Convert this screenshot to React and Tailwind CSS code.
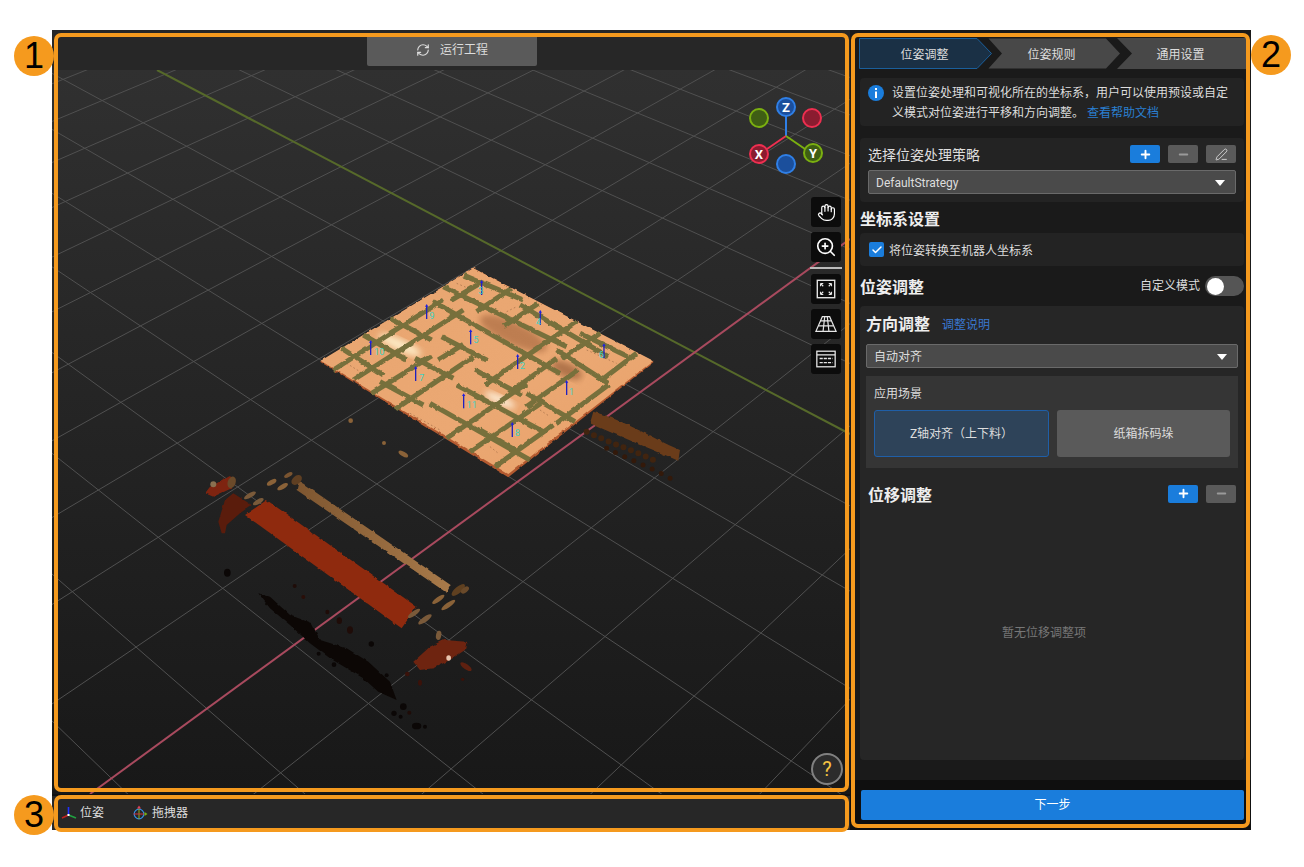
import React from 'react';
import { RefreshCw, Hand, ZoomIn, Plus, Minus, PenLine, Check } from 'lucide-react';

// ground grid projection, fitted from the axes in the screenshot
const project = (u, v) => {
  const w = 1 - 0.0335 * u + 0.03286 * v;
  return [(694 - 76.7 * u - 48.5 * v) / w, (351 + 27.2 * u - 24.8 * v) / w];
};

const gridLines = () => {
  const lines = [];
  for (let i = -16; i <= 24; i++) {
    if (i === 0) continue;
    const vLo = Math.max(-24, (0.12 - 1 + 0.0335 * i) / 0.03286);
    const uHi = Math.min(24, (1 - 0.12 + 0.03286 * i) / 0.0335);
    lines.push([project(i, vLo), project(i, 24)]);
    lines.push([project(-24, i), project(uHi, i)]);
  }
  return lines;
};

const slatsA = [
  [530, 185, 635, 115], [455, 150, 545, 97], [100, 360, 280, 245], [270, 250, 430, 150], [160, 390, 490, 180],
  [215, 430, 395, 318], [415, 330, 490, 283], [610, 230, 715, 160], [285, 478, 520, 320], [640, 420, 770, 325],
  [555, 405, 640, 345], [640, 345, 830, 215], [785, 325, 900, 250], [905, 390, 1010, 310], [680, 470, 835, 360],
  [440, 565, 680, 400], [510, 605, 730, 455], [585, 650, 760, 525], [770, 520, 925, 405],
];

const slatsB = [
  [490, 75, 670, 150], [430, 110, 800, 290], [400, 155, 780, 370], [270, 205, 395, 270], [125, 295, 250, 375],
  [190, 255, 320, 330], [425, 260, 560, 330], [240, 395, 370, 465], [345, 325, 460, 385], [470, 405, 730, 545],
  [525, 360, 665, 435], [390, 460, 690, 630], [540, 540, 645, 600], [680, 430, 825, 515], [660, 165, 925, 320],
  [770, 300, 925, 400], [840, 250, 985, 320],
];

const poses = [
  { x: 545, y: 90, label: '3', lx: 543, ly: 133 }, { x: 380, y: 162, label: '9', lx: 396, ly: 207 },
  { x: 721, y: 180, label: '4', lx: 716, ly: 226 }, { x: 512, y: 238, label: '5', lx: 528, ly: 280 },
  { x: 212, y: 270, label: '10', lx: 238, ly: 316 }, { x: 653, y: 312, label: '2', lx: 667, ly: 356 },
  { x: 912, y: 280, label: '6', lx: 904, ly: 324 }, { x: 347, y: 348, label: '7', lx: 365, ly: 393 },
  { x: 800, y: 390, label: '1', lx: 814, ly: 434 }, { x: 491, y: 430, label: '11', lx: 515, ly: 473 },
  { x: 637, y: 516, label: '8', lx: 652, ly: 559 },
];

// loose points of the cloud: x, y, rx, ry, angle, colour
const blobs = [
  [245, 97, 16, 7, -30, '#8a6238'], [278, 110, 18, 7, -30, '#8a6238'], [295, 75, 14, 6, -30, '#7a5430'], [320, 90, 18, 12, -40, '#5f3f22'],
  [180, 136, 20, 7, -30, '#7a5a3a'], [205, 155, 18, 7, -30, '#7a5a3a'], [125, 97, 12, 18, 20, '#6a4a2a'], [70, 103, 9, 9, 0, '#8a7050'],
  [745, 448, 22, 7, -35, '#8a6238'], [775, 465, 25, 7, -35, '#8a6238'], [805, 420, 25, 10, -40, '#5f4020'], [825, 420, 14, 8, -40, '#6a4a2a'],
  [672, 490, 22, 7, -35, '#7a5a3a'], [705, 508, 24, 8, -35, '#7a5a3a'], [746, 556, 8, 14, 10, '#7a5a3a'], [828, 650, 20, 8, 35, '#5e2010'],
  [776, 624, 7, 8, 0, '#e8c4ae'], [690, 698, 6, 9, 0, '#3a120a'], [652, 672, 7, 7, 0, '#3a120a'], [818, 688, 5, 5, 0, '#3a120a'],
  [112, 368, 10, 12, 0, '#0b0706'], [314, 408, 6, 6, 0, '#1f0c08'], [340, 441, 6, 6, 0, '#2a0e08'], [412, 486, 6, 7, 0, '#1f0c08'],
  [448, 512, 8, 10, 0, '#1f0c08'], [480, 540, 9, 11, 0, '#1f0c08'], [544, 582, 8, 8, 0, '#0b0706'], [386, 611, 6, 6, 0, '#0b0706'],
  [432, 644, 7, 7, 0, '#0b0706'], [590, 676, 6, 6, 0, '#0b0706'], [612, 790, 8, 8, 0, '#0b0706'], [632, 800, 6, 6, 0, '#0b0706'],
  [640, 770, 10, 10, 0, '#0b0706'], [680, 828, 14, 10, 0, '#0b0706'], [705, 830, 6, 6, 0, '#0b0706'], [658, 788, 6, 6, 0, '#1f0c08'],
];

// a run of round points following a path, the way the cloud looks when zoomed
const Beads = ({ d, color, size, gap }) => (
  <path d={d} fill="none" stroke={color} strokeWidth={size} strokeLinecap="round" strokeLinejoin="round" strokeDasharray={`0 ${gap}`} />
);

const Gizmo = () => (
  <g>
    <path d="M786 136V116" stroke="#2f7fe6" strokeWidth="2" />
    <path d="M786 136L767 149" stroke="#ee2f50" strokeWidth="2" />
    <path d="M786 136L805 149" stroke="#7bb010" strokeWidth="2" />
    <circle cx="759" cy="118" r="9" fill="#3f5e14" stroke="#7bb010" strokeWidth="2" />
    <circle cx="812" cy="118" r="9" fill="#8a1c30" stroke="#ee2f50" strokeWidth="2" />
    <circle cx="786" cy="164" r="9" fill="#1b4f9c" stroke="#2f7fe6" strokeWidth="2" />
    <circle cx="786" cy="107" r="9" fill="#1b4f9c" stroke="#2f7fe6" strokeWidth="2" />
    <circle cx="759" cy="154" r="9" fill="#8a1c30" stroke="#ee2f50" strokeWidth="2" />
    <circle cx="813" cy="153" r="9" fill="#3f5e14" stroke="#7bb010" strokeWidth="2" />
    <text x="786" y="111.5" textAnchor="middle" fontSize="13" fontWeight="700" fill="#fff">Z</text>
    <text x="759" y="158.5" textAnchor="middle" fontSize="13" fontWeight="700" fill="#fff">X</text>
    <text x="813" y="157.5" textAnchor="middle" fontSize="13" fontWeight="700" fill="#fff">Y</text>
  </g>
);

const Scene = () => (
  <svg viewBox="52 70 798 724" className="absolute inset-0 w-full h-full">
    <defs>
      <filter id="rough" x="-5%" y="-5%" width="110%" height="110%" colorInterpolationFilters="sRGB">
        <feTurbulence type="fractalNoise" baseFrequency="0.05" numOctaves="2" seed="4" />
        <feDisplacementMap in="SourceGraphic" scale="9" xChannelSelector="R" yChannelSelector="G" />
      </filter>
      <filter id="soft" colorInterpolationFilters="sRGB"><feGaussianBlur stdDeviation="9" /></filter>
      <linearGradient id="board" x1="0" y1="0" x2="1" y2="1">
        <stop offset="0" stopColor="#e8a570" />
        <stop offset="0.6" stopColor="#eba873" />
        <stop offset="1" stopColor="#e8a068" />
      </linearGradient>
      <linearGradient id="rail" x1="0" y1="0" x2="1" y2="0">
        <stop offset="0" stopColor="#7e5630" />
        <stop offset="1" stopColor="#a87a4a" />
      </linearGradient>
    </defs>

    {gridLines().map((l, i) => (
      <line key={i} x1={l[0][0]} y1={l[0][1]} x2={l[1][0]} y2={l[1][1]} stroke="#505050" strokeWidth="1" />
    ))}
    <line x1="157" y1="70" x2="850" y2="434" stroke="#56692a" strokeWidth="2" />
    <line x1="90" y1="794" x2="850" y2="239" stroke="#a84a5e" strokeWidth="2" />

    {/* shadow points behind the board */}
    <g transform="translate(300 250) scale(0.3333)">
      <g filter="url(#rough)">
        <path d="M880 485C960 505 1050 560 1140 600L1135 632C1060 600 960 560 870 520Z" fill="#6a3c1a" />
      </g>
      <Beads d="M860 545C930 580 1000 600 1060 630" color="#41240f" size="18" gap="24" />
      <Beads d="M920 595C980 625 1060 655 1120 690" color="#33190a" size="15" gap="30" />
      <ellipse cx="310" cy="612" rx="16" ry="7" transform="rotate(30 310 612)" fill="#8a6238" />
      <circle cx="152" cy="512" r="7" fill="#8a6238" />
      <circle cx="252" cy="579" r="6" fill="#8a6238" />
    </g>

    {/* board */}
    <g transform="translate(300 250) scale(0.3333)">
      <g filter="url(#rough)">
        <path d="M520 55L1062 335L625 682L60 335Z" fill="#b3592f" />
        <path d="M520 55L1060 332L625 672L62 332Z" fill="url(#board)" />
      </g>
      <ellipse cx="640" cy="250" rx="110" ry="34" transform="rotate(25 640 250)" fill="#9a5c36" opacity="0.55" filter="url(#soft)" />
      <ellipse cx="800" cy="360" rx="50" ry="22" transform="rotate(25 800 360)" fill="#8a5230" opacity="0.6" filter="url(#soft)" />
      <ellipse cx="300" cy="285" rx="70" ry="18" transform="rotate(25 300 285)" fill="#fff3cf" opacity="0.85" filter="url(#soft)" />
      <ellipse cx="600" cy="450" rx="50" ry="14" transform="rotate(25 600 450)" fill="#fff3df" opacity="0.85" filter="url(#soft)" />
      <g filter="url(#rough)">
        {slatsB.concat(slatsA).map((s, i) => (
          <line key={i} x1={s[0]} y1={s[1]} x2={s[2]} y2={s[3]} stroke="#77703c" strokeWidth="15" />
        ))}
      </g>
      <g stroke="#8b5a3a" strokeWidth="2" strokeDasharray="5 7" opacity="0.8">
        <line x1="140" y1="340" x2="175" y2="362" />
        <line x1="470" y1="100" x2="505" y2="115" />
        <line x1="620" y1="185" x2="650" y2="170" />
        <line x1="860" y1="300" x2="950" y2="340" />
        <line x1="570" y1="590" x2="595" y2="610" />
        <line x1="720" y1="480" x2="750" y2="500" />
        <line x1="330" y1="490" x2="420" y2="540" />
      </g>
      {poses.map((p) => (
        <g key={p.label}>
          <path d={`M${p.x} ${p.y + 45}V${p.y + 6}`} stroke="#2020c0" strokeWidth="4" />
          <path d={`M${p.x - 5} ${p.y + 8}L${p.x} ${p.y}L${p.x + 5} ${p.y + 8}Z`} fill="#2020e0" />
          <text x={p.lx} y={p.ly} textAnchor="middle" fontSize="28" fill="#3fd0c0">{p.label}</text>
        </g>
      ))}
    </g>

    {/* pallet rails */}
    <g transform="translate(190 450) scale(0.3333)">
      <g filter="url(#rough)">
        <path d="M205 430L240 440L300 495L365 520L390 570L470 595L535 635L600 695L620 750L565 725L520 685L420 625L360 580L300 525L240 475Z" fill="#0c0705" />
        <path d="M45 130L60 110L120 78L135 95L125 115L70 140Z" fill="#7e2410" />
        <path d="M85 215L105 150L130 130L185 165L150 190L110 225L105 250L95 250Z" fill="#5a1c0c" />
        <path d="M670 635L720 590L760 570L830 575L825 600L780 630L730 655L690 660Z" fill="#6e2410" />
        <path d="M230 150L680 470L635 535L165 195Z" fill="#8f2a0e" />
        <path d="M325 98L338 100L782 405L770 428L320 120Z" fill="url(#rail)" />
      </g>
      {blobs.map((b, i) => (
        <ellipse key={i} cx={b[0]} cy={b[1]} rx={b[2]} ry={b[3]} transform={`rotate(${b[4]} ${b[0]} ${b[1]})`} fill={b[5]} />
      ))}
    </g>

    <Gizmo />
  </svg>
);

const FitIcon = () => (
  <svg viewBox="0 0 24 24" className="w-[22px] h-[22px]" fill="none" stroke="#e6e6e6">
    <rect x="2.5" y="2.5" width="19" height="19" strokeWidth="1.5" />
    <path d="M6 6l3 3M6 6h3M6 6v3M18 6l-3 3M18 6h-3M18 6v3M6 18l3-3M6 18h3M6 18v-3M18 18l-3-3M18 18h-3M18 18v-3" strokeWidth="1.2" />
  </svg>
);

const PlaneIcon = () => (
  <svg viewBox="0 0 24 24" className="w-[22px] h-[22px]" fill="none" stroke="#e6e6e6" strokeWidth="1.3">
    <path d="M8 4H16L23 20H1Z" />
    <path d="M6.2 8.5H17.8M3.8 14H20.2M10.6 4L8.8 20M13.4 4L15.2 20" />
  </svg>
);

const ListIcon = () => (
  <svg viewBox="0 0 24 24" className="w-[22px] h-[22px]" fill="none" stroke="#e6e6e6">
    <rect x="2" y="3.5" width="20" height="17" strokeWidth="1.4" />
    <path d="M2 7.5H22" strokeWidth="1.4" />
    <path d="M5 11.5H19M5 16H19" strokeWidth="1.5" strokeDasharray="3.5 1" />
  </svg>
);

const ToolButton = ({ children }) => (
  <div className="w-[30px] h-[30px] bg-[#0c0c0c] rounded-[3px] flex items-center justify-center">{children}</div>
);

const Viewport = () => (
  <div className="relative flex-1 bg-gradient-to-b from-[#303030] to-[#181818] overflow-hidden">
    <Scene />
    <div className="absolute right-2 top-[127px] flex flex-col items-center">
      <ToolButton><Hand size={19} color="#fff" strokeWidth={1.5} /></ToolButton>
      <div className="mt-[5px]"><ToolButton><ZoomIn size={22} color="#fff" strokeWidth={1.8} /></ToolButton></div>
      <div className="w-[32px] h-[2px] bg-[#bbbbbb] mt-[5px] mb-[5px]"></div>
      <ToolButton><FitIcon /></ToolButton>
      <div className="mt-[5px]"><ToolButton><PlaneIcon /></ToolButton></div>
      <div className="mt-[5px]"><ToolButton><ListIcon /></ToolButton></div>
    </div>
    <div className="absolute right-[7px] bottom-[9px] w-[32px] h-[32px] rounded-full border-2 border-[#808080] bg-[#2c2c2c] flex items-center justify-center text-[20px] text-[#f5c242]">
      ?
    </div>
  </div>
);

const AxisIcon = () => (
  <svg viewBox="0 0 16 16" className="w-4 h-4">
    <path d="M7.5 10V2" stroke="#2030ff" strokeWidth="1.6" />
    <path d="M7.5 10L1 13" stroke="#c02020" strokeWidth="1.6" />
    <path d="M7.5 10L15 13" stroke="#20a040" strokeWidth="1.6" />
    <rect x="6.5" y="9" width="2" height="2" fill="#fff" />
  </svg>
);

const DragIcon = () => (
  <svg viewBox="0 0 16 16" className="w-4 h-4" fill="none">
    <circle cx="7" cy="9" r="4.8" stroke="#2f8fe6" strokeWidth="1.2" />
    <path d="M7 3.5V14" stroke="#8ab020" strokeWidth="1" />
    <path d="M1.5 9H12" stroke="#d03040" strokeWidth="1" />
    <path d="M7 0.5L9 3.5H5Z" fill="#e0405a" />
    <path d="M15.5 9L12.5 11V7Z" fill="#7bb010" />
  </svg>
);

const LeftColumn = () => (
  <div className="w-[798px] flex flex-col">
    <div className="h-[40px] bg-[#272727] flex justify-center pt-[7px] pl-[2px]">
      <div className="w-[170px] h-[29px] bg-[#5a5a5a] rounded-b-[2px] flex items-center justify-center gap-[10px] pb-[3px] text-[12px] text-[#dddddd]">
        <RefreshCw size={14} strokeWidth={2} />
        <span>运行工程</span>
      </div>
    </div>
    <Viewport />
    <div className="h-[34px] mt-[2px] bg-[#272727] flex items-center pl-[9px] text-[12px] text-[#dddddd]">
      <AxisIcon />
      <span className="ml-[3px]">位姿</span>
      <div className="ml-[28px]"><DragIcon /></div>
      <span className="ml-[4px]">拖拽器</span>
    </div>
  </div>
);

const Step = ({ label, active, first, last }) => {
  let shape = 'M0.5 0.5H118L132 15.5L118 30.5H0.5L14 15.5Z';
  if (first) shape = 'M0.5 0.5H118L132.5 15.5L118 30.5H0.5Z';
  if (last) shape = 'M0 0H132V31H0L15 15.5Z';
  return (
    <div className={`relative w-[133px] h-[31px] flex items-center justify-center pt-[2px] text-[12px] text-[#dddddd] ${first ? 'pr-[2px]' : '-ml-[4px] pr-[6px]'}`}>
      <svg viewBox="0 0 133 31" className="absolute inset-0 w-full h-full">
        <path d={shape} fill={active ? '#1a3045' : '#484848'} stroke={active ? '#1a5f9c' : 'none'} />
      </svg>
      <span className="relative">{label}</span>
    </div>
  );
};

const SmallButton = ({ blue, children }) => (
  <div className={`w-[30px] h-[18px] rounded-[2px] flex items-center justify-center ${blue ? 'bg-[#1a7ddc]' : 'bg-[#5a5a5a]'}`}>{children}</div>
);

const SelectBox = ({ value }) => (
  <div className="h-[24px] bg-[#4a4a4a] border border-[#6a6a6a] rounded-[2px] flex items-center justify-between pt-[2px] pl-[7px] pr-[10px] text-[12px] text-[#dddddd]">
    <span>{value}</span>
    <div className="w-0 h-0 border-l-[5px] border-r-[5px] border-t-[6px] border-l-transparent border-r-transparent border-t-white"></div>
  </div>
);

const RightColumn = () => (
  <div className="w-[401px] flex flex-col bg-[#1a1a1a]">
    <div className="flex-1 pl-[9px] pt-[8px]">
      <div className="flex">
        <Step label="位姿调整" active first />
        <Step label="位姿规则" />
        <Step label="通用设置" last />
      </div>

      <div className="ml-px w-[384px]">
        <div className="mt-[9px] h-[48px] bg-[#232323] rounded-[4px] flex pl-[8px] pr-[8px] pt-[5px]">
          <svg viewBox="0 0 16 16" className="w-4 h-4 mt-[2px] shrink-0">
            <circle cx="8" cy="8" r="8" fill="#1a7ddc" />
            <rect x="7" y="3" width="2" height="2" fill="#fff" />
            <rect x="7" y="6.5" width="2" height="6.5" fill="#fff" />
          </svg>
          <div className="ml-[8px] text-[12px] leading-[20px] text-[#dddddd]">
            <div>设置位姿处理和可视化所在的坐标系，用户可以使用预设或自定</div>
            <div className="flex">
              <span>义模式对位姿进行平移和方向调整。</span>
              <span className="text-[#2a7fd0] ml-[3px]">查看帮助文档</span>
            </div>
          </div>
        </div>

        <div className="mt-[12px] h-[64px] bg-[#232323] rounded-[4px] px-[8px] pt-[7px]">
          <div className="flex items-center justify-between h-[18px] mb-[7px]">
            <span className="text-[14px] text-[#dddddd] mt-[2px]">选择位姿处理策略</span>
            <div className="flex gap-2">
              <SmallButton blue><Plus size={13} color="#fff" strokeWidth={3.5} /></SmallButton>
              <SmallButton><Minus size={13} color="#9a9a9a" strokeWidth={3.5} /></SmallButton>
              <SmallButton><PenLine size={13} color="#dddddd" strokeWidth={1.6} /></SmallButton>
            </div>
          </div>
          <SelectBox value="DefaultStrategy" />
        </div>

        <div className="h-[31px] flex items-center pt-[4px] text-[16px] font-bold text-[#eeeeee]">坐标系设置</div>
        <div className="h-[33px] bg-[#232323] rounded-[4px] flex items-center pl-[9px] text-[12px] text-[#dddddd]">
          <div className="w-[15px] h-[15px] bg-[#1a7ddc] rounded-[2px] flex items-center justify-center">
            <Check size={12} color="#fff" strokeWidth={3} />
          </div>
          <span className="ml-[5px] mt-[2px]">将位姿转换至机器人坐标系</span>
        </div>

        <div className="h-[40px] flex items-center justify-between">
          <span className="text-[16px] font-bold text-[#eeeeee] mt-[3px]">位姿调整</span>
          <div className="flex items-center">
            <span className="text-[12px] text-[#dddddd] mr-[5px]">自定义模式</span>
            <div className="w-[39px] h-[20px] rounded-full bg-[#555555] flex items-center pl-[2px]">
              <div className="w-[17px] h-[17px] rounded-full bg-white"></div>
            </div>
          </div>
        </div>

        <div className="h-[454px] bg-[#262626] rounded-[4px] px-[6px] flex flex-col">
          <div className="h-[38px] flex items-center">
            <span className="text-[16px] font-bold text-[#eeeeee]">方向调整</span>
            <span className="ml-[12px] text-[12px] text-[#3a78d0]">调整说明</span>
          </div>
          <SelectBox value="自动对齐" />
          <div className="mt-[8px] h-[92px] bg-[#353535] px-[8px]">
            <div className="h-[34px] flex items-center pt-[2px] text-[12px] text-[#dddddd]">应用场景</div>
            <div className="flex gap-2">
              <div className="flex-1 h-[47px] bg-[#2e4359] border border-[#1f5fa8] rounded-[3px] flex items-center justify-center text-[12px] text-[#dddddd]">Z轴对齐（上下料）</div>
              <div className="flex-1 h-[47px] bg-[#5a5a5a] rounded-[3px] flex items-center justify-center text-[12px] text-[#dddddd]">纸箱拆码垛</div>
            </div>
          </div>
          <div className="h-[54px] flex items-center justify-between pl-[2px] pr-[2px]">
            <span className="text-[16px] font-bold text-[#eeeeee] mt-[1px]">位移调整</span>
            <div className="flex gap-2 -mt-[3px]">
              <SmallButton blue><Plus size={13} color="#fff" strokeWidth={3.5} /></SmallButton>
              <SmallButton><Minus size={13} color="#9a9a9a" strokeWidth={3.5} /></SmallButton>
            </div>
          </div>
          <div className="flex-1 flex items-center justify-center text-[12px] text-[#777777] pb-[17px] pr-[16px]">暂无位移调整项</div>
        </div>
      </div>
    </div>

    <div className="h-[50px] bg-[#0f0f0f] pt-[10px] pl-[11px]">
      <div className="w-[383px] h-[30px] bg-[#1a7ddc] rounded-[2px] flex items-center justify-center text-[12px] text-white">下一步</div>
    </div>
  </div>
);

const Callout = ({ n, className }) => (
  <div className={`absolute w-[40px] h-[40px] rounded-full bg-[#f59a1e] flex items-center justify-center text-[36px] text-black [font-family:'Liberation_Sans',sans-serif] ${className}`}>
    {n}
  </div>
);

const App = () => (
  <div className="relative w-[1304px] h-[867px] bg-white pt-[30px] pl-[52px] overflow-hidden [font-family:'Roboto','Noto_Sans_CJK_SC',sans-serif]">
    <div className="flex w-[1199px] h-[800px] bg-[#111111]">
      <LeftColumn />
      <RightColumn />
    </div>

    {/* numbered annotations drawn on top of the screenshot */}
    <div className="absolute left-[54px] top-[33px] w-[795px] h-[759px] border-4 border-[#f59a1e] rounded-[7px]"></div>
    <div className="absolute left-[851px] top-[33px] w-[399px] h-[795px] border-4 border-[#f59a1e] rounded-[7px]"></div>
    <div className="absolute left-[54px] top-[795px] w-[795px] h-[37px] border-4 border-[#f59a1e] rounded-[7px]"></div>
    <Callout n="1" className="left-[14px] top-[36px]" />
    <Callout n="2" className="left-[1251px] top-[35px]" />
    <Callout n="3" className="left-[14px] top-[795px]" />
  </div>
);

export default App;
